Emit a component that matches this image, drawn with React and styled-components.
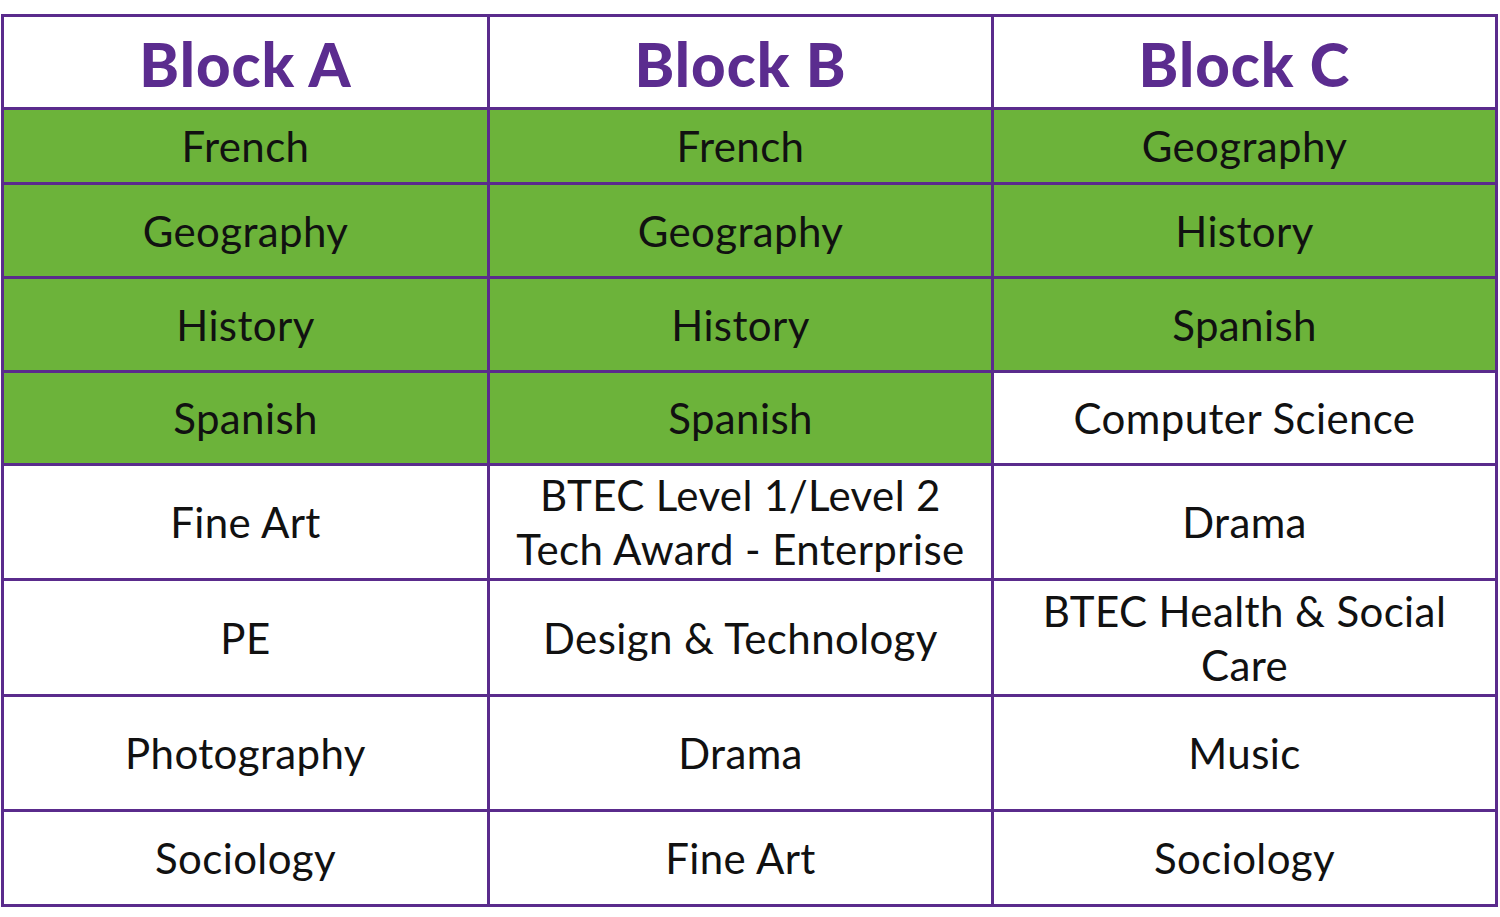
import React from "react";
import styled, { createGlobalStyle } from "styled-components";

const GlobalStyle = createGlobalStyle`
  html, body {
    margin: 0;
    padding: 0;
    background: #ffffff;
  }
  body {
    font-family: "Lato", "Liberation Sans", sans-serif;
  }
`;

const Page = styled.div`
  padding: 14px 2px 0 1px;
`;

const Table = styled.div`
  display: grid;
  grid-template-columns: 483px 501px 501px;
  grid-template-rows: 90px 72px 91px 91px 90px 112px 113px 112px 92px;
  gap: 3px;
  padding: 3px;
  width: max-content;
  background: #5a2b8c;
`;

const Cell = styled.div`
  display: flex;
  align-items: center;
  justify-content: center;
  text-align: center;
  background: ${(props) => (props.green ? "#6cb33a" : "#ffffff")};
  color: #111111;
  font-size: 42px;
  line-height: 54px;
  padding: 0 12px;
  letter-spacing: 0.4px;
`;

const HeadCell = styled(Cell)`
  color: #5b2c8f;
  font-weight: 900;
  font-size: 60px;
  letter-spacing: 1px;
  padding-top: 4px;
`;

const rows = [
  [["French", 1], ["French", 1], ["Geography", 1]],
  [["Geography", 1], ["Geography", 1], ["History", 1]],
  [["History", 1], ["History", 1], ["Spanish", 1]],
  [["Spanish", 1], ["Spanish", 1], ["Computer Science", 0]],
  [["Fine Art", 0], ["BTEC Level 1/Level 2 Tech Award - Enterprise", 0], ["Drama", 0]],
  [["PE", 0], ["Design & Technology", 0], ["BTEC Health & Social Care", 0]],
  [["Photography", 0], ["Drama", 0], ["Music", 0]],
  [["Sociology", 0], ["Fine Art", 0], ["Sociology", 0]],
];

export default function App() {
  return (
    <Page>
      <GlobalStyle />
      <Table>
        <HeadCell>Block A</HeadCell>
        <HeadCell>Block B</HeadCell>
        <HeadCell>Block C</HeadCell>
        {rows.map((row, i) =>
          row.map(([text, green], j) => (
            <Cell key={i + "-" + j} green={green ? 1 : 0}>
              {text}
            </Cell>
          ))
        )}
      </Table>
    </Page>
  );
}
